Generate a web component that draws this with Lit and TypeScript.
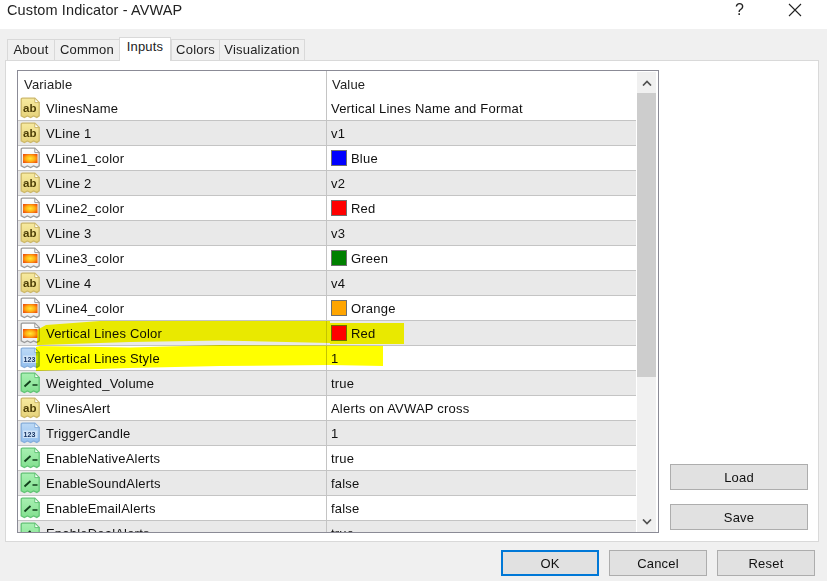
import { LitElement, html, css, svg } from "lit";
import { customElement } from "lit/decorators.js";

type Kind = "ab" | "clr" | "num" | "bool";
interface Row { k: Kind; n: string; v: string; c?: string }

const ROWS: Row[] = [
  { k: "ab", n: "VlinesName", v: "Vertical Lines Name and Format" },
  { k: "ab", n: "VLine 1", v: "v1" },
  { k: "clr", n: "VLine1_color", v: "Blue", c: "#0000ff" },
  { k: "ab", n: "VLine 2", v: "v2" },
  { k: "clr", n: "VLine2_color", v: "Red", c: "#ff0000" },
  { k: "ab", n: "VLine 3", v: "v3" },
  { k: "clr", n: "VLine3_color", v: "Green", c: "#008000" },
  { k: "ab", n: "VLine 4", v: "v4" },
  { k: "clr", n: "VLine4_color", v: "Orange", c: "#ffa500" },
  { k: "clr", n: "Vertical Lines Color", v: "Red", c: "#ff0000" },
  { k: "num", n: "Vertical Lines Style", v: "1" },
  { k: "bool", n: "Weighted_Volume", v: "true" },
  { k: "ab", n: "VlinesAlert", v: "Alerts on AVWAP cross" },
  { k: "num", n: "TriggerCandle", v: "1" },
  { k: "bool", n: "EnableNativeAlerts", v: "true" },
  { k: "bool", n: "EnableSoundAlerts", v: "false" },
  { k: "bool", n: "EnableEmailAlerts", v: "false" },
  { k: "bool", n: "EnableDealAlerts", v: "true" },
];

const DOC =
  "M2.5 1.2H14.8L19.2 5.6V18.8L16.8 20.4L13.6 19L10.6 20.6L7.4 19L4.4 20.6L1.2 18.8V2.5Q1.2 1.2 2.5 1.2Z";
const PAL: Record<Kind, string> = {
  ab: "#cdb868",
  clr: "#9a9a9a",
  num: "#86aedb",
  bool: "#62c475",
};

function icon(k: Kind) {
  let inner;
  if (k === "ab") {
    inner = svg`<text class="gab" x="3" y="15">ab</text>`;
  } else if (k === "num") {
    inner = svg`<rect x="3" y="8.5" width="14.5" height="7.5" fill="#cfe3f8"/><text class="gnum" x="3.6" y="15">123</text>`;
  } else if (k === "clr") {
    inner = svg`<rect x="3" y="7" width="14.5" height="9" fill="url(#gfire)"/>`;
  } else {
    inner = svg`<path d="M4.5 14.5L10.5 9" stroke="#123f1c" stroke-width="1.9" fill="none"/><path d="M12.5 13H17.5" stroke="#123f1c" stroke-width="1.5" fill="none"/>`;
  }
  return html`<svg class="ico" width="21" height="22" viewBox="0 0 21 22">
    <path d=${DOC} fill="url(#g${k})" stroke=${PAL[k]} stroke-width="1.3"/>
    <path d="M14.8 1.2V5.6H19.2Z" fill="#fff" stroke=${PAL[k]} stroke-width="1"/>
    ${inner}
  </svg>`;
}

@customElement("app-root")
export class AppRoot extends LitElement {
  static styles = css`
    :host {
      display: block;
      width: 827px;
      height: 581px;
      position: relative;
      overflow: hidden;
      background: #f0f0f0;
      font: 13px "Liberation Sans", Arial, sans-serif;
      letter-spacing: 0.2px;
      color: #111;
    }
    .title {
      height: 29px;
      background: #fff;
      display: flex;
      align-items: center;
      padding: 0 0 10px 7px;
      box-sizing: border-box;
      font-size: 14.5px;
      letter-spacing: 0.12px;
      color: #222;
    }
    .title .t { flex: 1; }
    .help { width: 53px; font-size: 16px; }
    .close { width: 39px; display: flex; }
    .defs { position: absolute; width: 0; height: 0; }
    .tabs {
      display: flex;
      align-items: flex-end;
      height: 31px;
      padding-left: 7px;
      box-sizing: border-box;
    }
    .tab {
      height: 21px;
      box-sizing: border-box;
      padding: 2px 0 0;
      text-align: center;
      background: #f0f0f0;
      border: 1px solid #d9d9d9;
      border-bottom: none;
      margin-right: -1px;
      color: #222;
    }
    .tab.on {
      height: 24px;
      background: #fff;
      position: relative;
      z-index: 1;
      margin-bottom: -1px;
      padding-top: 1px;
      margin-right: 0;
    }
    .panel {
      margin-left: 5px;
      width: 814px;
      height: 482px;
      box-sizing: border-box;
      background: #fff;
      border: 1px solid #d9d9d9;
      padding: 9px 10px 8px 11px;
      display: flex;
      gap: 11px;
    }
    .table {
      width: 642px;
      height: 463px;
      box-sizing: border-box;
      border: 1px solid #8b8b96;
      display: flex;
      overflow: hidden;
      flex: none;
    }
    .grid { width: 618px; flex: none; display: flex; flex-direction: column; overflow: hidden; }
    .head {
      flex: none;
      height: 25px;
      display: grid;
      grid-template-columns: 308px 1fr;
      align-items: center;
      color: #222;
    }
    .head span {
      padding: 2px 0 0 6px;
      height: 100%;
      box-sizing: border-box;
      display: flex;
      align-items: center;
    }
    .head span + span { border-left: 1px solid #c4c4c4; padding-left: 5px; }
    .row {
      flex: none;
      height: 25px;
      box-sizing: border-box;
      border-bottom: 1px solid #c4c4c4;
      display: grid;
      grid-template-columns: 308px 1fr;
      background: #fff;
    }
    .row.alt { background: #e9e9e9; }
    .cell { display: flex; align-items: center; min-width: 0; }
    .name { padding-left: 2px; gap: 5px; }
    .val { border-left: 1px solid #c4c4c4; padding-left: 4px; gap: 4px; }
    .ico { flex: none; }
    .gab { font: bold 11.5px "Liberation Sans", sans-serif; fill: #4e3f08; letter-spacing: 0; }
    .gnum { font: bold 7px "Liberation Sans", sans-serif; fill: #14305f; letter-spacing: 0; }
    .sw { width: 14px; height: 14px; border: 1px solid #6f6f6f; flex: none; }
    .bar {
      width: 22px;
      flex: none;
      box-sizing: border-box;
      padding: 1px 2px 0 1px;
      display: flex;
      flex-direction: column;
    }
    .sb { height: 21px; background: #f0f0f0; display: flex; align-items: center; justify-content: center; flex: none; }
    .thumb { height: 284px; background: #cdcdcd; flex: none; }
    .track { flex: 1; background: #f0f0f0; }
    .side {
      width: 138px;
      flex: none;
      display: flex;
      flex-direction: column;
      justify-content: flex-end;
      gap: 14px;
      padding-bottom: 3px;
    }
    .btn {
      height: 26px;
      box-sizing: border-box;
      background: #e1e1e1;
      border: 1px solid #adadad;
      display: flex;
      align-items: center;
      justify-content: center;
      color: #111;
    }
    .foot {
      display: flex;
      justify-content: flex-end;
      gap: 10px;
      padding: 8px 12px 0 0;
    }
    .foot .btn { width: 98px; }
    .foot .btn.def { border: 2px solid #0078d7; }
    .marker {
      position: absolute;
      left: 0;
      top: 0;
      mix-blend-mode: multiply;
      pointer-events: none;
    }
  `;

  render() {
    const tabs: [string, number, boolean][] = [
      ["About", 48, false],
      ["Common", 66, false],
      ["Inputs", 52, true],
      ["Colors", 49, false],
      ["Visualization", 86, false],
    ];
    return html`
      <svg class="defs" aria-hidden="true">
        <defs>
          <linearGradient id="gab" x1="0" y1="0" x2="0" y2="1"><stop offset="0" stop-color="#f7ea9f"/><stop offset="1" stop-color="#e6d27a"/></linearGradient>
          <linearGradient id="gclr" x1="0" y1="0" x2="0" y2="1"><stop offset="0" stop-color="#ffffff"/><stop offset="1" stop-color="#ededed"/></linearGradient>
          <linearGradient id="gnum" x1="0" y1="0" x2="0" y2="1"><stop offset="0" stop-color="#bcd9f6"/><stop offset="1" stop-color="#93bfee"/></linearGradient>
          <linearGradient id="gbool" x1="0" y1="0" x2="0" y2="1"><stop offset="0" stop-color="#a8f0b2"/><stop offset="1" stop-color="#82e08f"/></linearGradient>
          <radialGradient id="gfire" cx=".5" cy=".5" r=".6"><stop offset="0" stop-color="#ffe93a"/><stop offset=".55" stop-color="#ffae12"/><stop offset="1" stop-color="#f0560e"/></radialGradient>
        </defs>
      </svg>
      <div class="title">
        <span class="t">Custom Indicator - AVWAP</span>
        <span class="help">?</span>
        <span class="close">
          <svg width="14" height="14" viewBox="0 0 14 14"><path d="M1 1L13 13M13 1L1 13" stroke="#222" stroke-width="1.1"/></svg>
        </span>
      </div>
      <div class="tabs">
        ${tabs.map(
          ([t, w, on]) => html`<div class="tab ${on ? "on" : ""}" style="width:${w}px">${t}</div>`
        )}
      </div>
      <div class="panel">
        <div class="table">
          <div class="grid">
            <div class="head"><span>Variable</span><span>Value</span></div>
            ${ROWS.map(
              (r, i) => html`<div class="row ${i % 2 ? "alt" : ""}">
                <div class="cell name">${icon(r.k)}<span>${r.n}</span></div>
                <div class="cell val">
                  ${r.c ? html`<span class="sw" style="background:${r.c}"></span>` : ""}<span>${r.v}</span>
                </div>
              </div>`
            )}
          </div>
          <div class="bar">
            <div class="sb">
              <svg width="10" height="6" viewBox="0 0 10 6"><path d="M1 5.5L5 1.5L9 5.5" fill="none" stroke="#505050" stroke-width="1.7"/></svg>
            </div>
            <div class="thumb"></div>
            <div class="track"></div>
            <div class="sb">
              <svg width="10" height="6" viewBox="0 0 10 6"><path d="M1 .5L5 4.5L9 .5" fill="none" stroke="#505050" stroke-width="1.7"/></svg>
            </div>
          </div>
        </div>
        <div class="side">
          <div class="btn">Load</div>
          <div class="btn">Save</div>
        </div>
      </div>
      <div class="foot">
        <div class="btn def">OK</div>
        <div class="btn">Cancel</div>
        <div class="btn">Reset</div>
      </div>
      <svg class="marker" width="827" height="581" viewBox="0 0 827 581">
        <path fill="#ffff00" d="M37 330L46 325L100 321H330V323H404V344H330V343L220 340.5L130 342L40 345H37Z"/>
        <path fill="#ffff00" d="M36 347L40 346L130 347.5L220 345L330 345.5L383 346V366L330 365L220 366L130 368L36 371Z"/>
      </svg>
    `;
  }
}
